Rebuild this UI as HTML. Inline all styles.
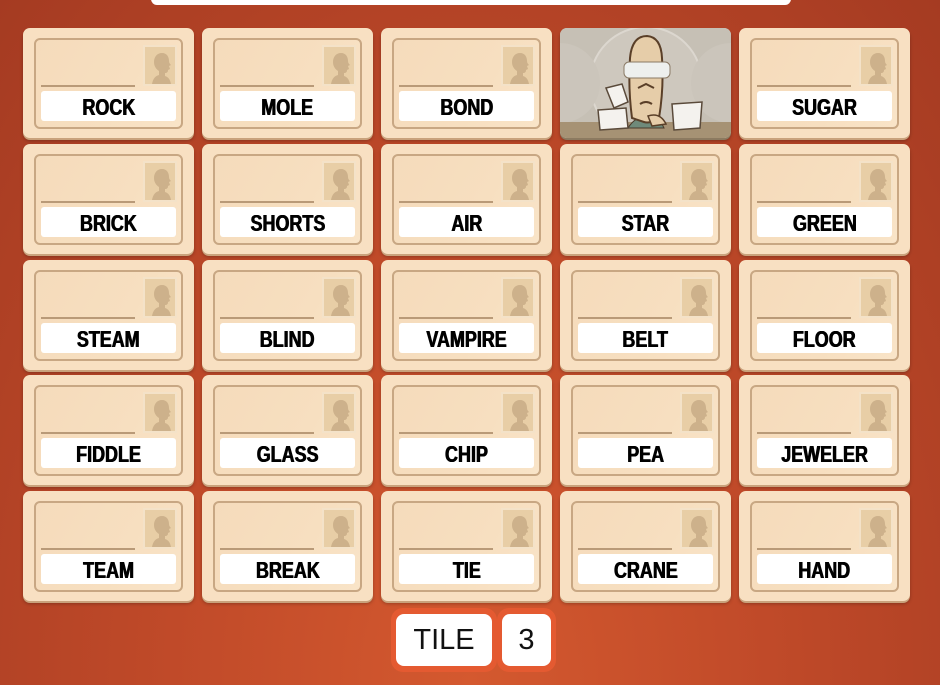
<!DOCTYPE html>
<html><head><meta charset="utf-8"><style>
*{margin:0;padding:0;box-sizing:border-box}
html,body{width:940px;height:685px;overflow:hidden}
body{position:relative;background:radial-gradient(ellipse at 50% 100%,#d4592f 0%,#c04a29 45%,#a53b22 100%);font-family:"Liberation Sans",sans-serif}
.top{position:absolute;left:151px;top:-10px;width:640px;height:15px;background:#fff;border-radius:0 0 6px 6px}
.card{position:absolute;width:171px;height:110px;background:#f8e0c2;border-radius:7px;box-shadow:0 2px 0 #c9a27c,0 3px 3px rgba(0,0,0,.25)}
.in{position:absolute;left:11px;top:10px;width:149px;height:91px;border:2px solid #c8a783;border-radius:6px;background:linear-gradient(120deg,#f5dbbb 0%,#f7dfc0 60%,#f9e4c8 100%)}
.ln{position:absolute;left:18px;top:57px;width:94px;height:2px;background:#b99a78}
.pic{position:absolute;left:120px;top:17px;width:34px;height:41px;background:#e8cea6;border:2px solid #f4e2c8}
.pic svg{position:absolute;left:3px;top:3px}
.w{position:absolute;left:18px;top:63px;width:135px;height:30px;background:#fff;border-radius:3px;text-align:center;line-height:32px;color:#000;white-space:nowrap}
.w span{display:inline-block;font-weight:bold;font-size:23px;transform:scaleX(.78);text-shadow:0.5px 0 0 #000,-0.5px 0 0 #000}
.img{position:absolute;width:171px;height:110px;border-radius:7px;overflow:hidden;background:#c4beb3;box-shadow:0 2px 0 #8c7a60,0 3px 3px rgba(0,0,0,.3)}
.btn{position:absolute;top:608px;height:64px;background:#e45a31;border-radius:12px}
.btn div{position:absolute;left:5px;top:6px;right:5px;bottom:6px;background:#fff;border-radius:8px;text-align:center;font-size:29px;line-height:53px;color:#111}
</style></head><body>
<div class="top"></div>
<div id="g"></div>
<div class="btn" style="left:391px;width:106px"><div>TILE</div></div>
<div class="btn" style="left:497px;width:59px"><div>3</div></div>
<script>
var words=[["ROCK","MOLE","BOND",null,"SUGAR"],["BRICK","SHORTS","AIR","STAR","GREEN"],["STEAM","BLIND","VAMPIRE","BELT","FLOOR"],["FIDDLE","GLASS","CHIP","PEA","JEWELER"],["TEAM","BREAK","TIE","CRANE","HAND"]];
var xs=[23,202,381,560,739],ys=[28,144,260,375,491],h="";
var sil='<svg width="26" height="34" viewBox="0 0 26 34"><path d="M14 3c5 0 7 4 7 8 0 2 1 3 2 4l-2 1 1 3-2 1c0 2-1 3-3 3l0 3c3 1 5 3 6 8H4c1-5 3-8 7-9l0-4c-3-2-5-5-5-9 0-5 3-9 8-9z" fill="#cdb18b"/></svg>';
for(var r=0;r<5;r++)for(var c=0;c<5;c++){var w=words[r][c];
if(w===null){h+='<div class="img" style="left:'+xs[c]+'px;top:'+ys[r]+'px"><svg width="171" height="110" viewBox="0 0 171 110"><rect width="171" height="110" fill="#c6c0b5"/><circle cx="86" cy="55" r="56" fill="#cec8be" stroke="#dcd7cf" stroke-width="2"/><circle cx="0" cy="55" r="40" fill="#cbc5bb"/><circle cx="171" cy="55" r="40" fill="#cbc5bb"/><rect x="0" y="94" width="171" height="16" fill="#a69274"/><path d="M68 100 Q78 84 98 88 L104 100Z" fill="#6f8a7a" stroke="#4a3a2a"/><path d="M72 90 Q68 60 70 30 Q72 8 87 8 Q101 9 102 30 Q104 60 99 90 Q90 96 84 94Z" fill="#e6cda9" stroke="#5a3f28" stroke-width="2"/><rect x="64" y="34" width="46" height="16" rx="5" fill="#eef0ee" stroke="#8a7a65"/><path d="M78 60 L86 56 L94 60 M80 76 Q86 72 92 76" stroke="#5a3f28" stroke-width="2" fill="none"/><path d="M38 82 L66 80 L68 100 L40 102Z" fill="#f4f2ee" stroke="#5a4a3a" stroke-width="1.5"/><path d="M112 76 L142 74 L140 100 L114 102Z" fill="#f4f2ee" stroke="#5a4a3a" stroke-width="1.5"/><path d="M46 60 L62 56 L68 74 L54 80Z" fill="#f4f2ee" stroke="#5a4a3a" stroke-width="1.5"/><path d="M88 88 Q100 84 106 96 L92 98Z" fill="#e6cda9" stroke="#5a3f28" stroke-width="1.5"/></svg></div>';continue;}
h+='<div class="card" style="left:'+xs[c]+'px;top:'+ys[r]+'px"><div class="in"></div><div class="ln"></div><div class="pic">'+sil+'</div><div class="w"><span>'+w+'</span></div></div>';}
document.getElementById('g').innerHTML=h;
</script>
</body></html>
